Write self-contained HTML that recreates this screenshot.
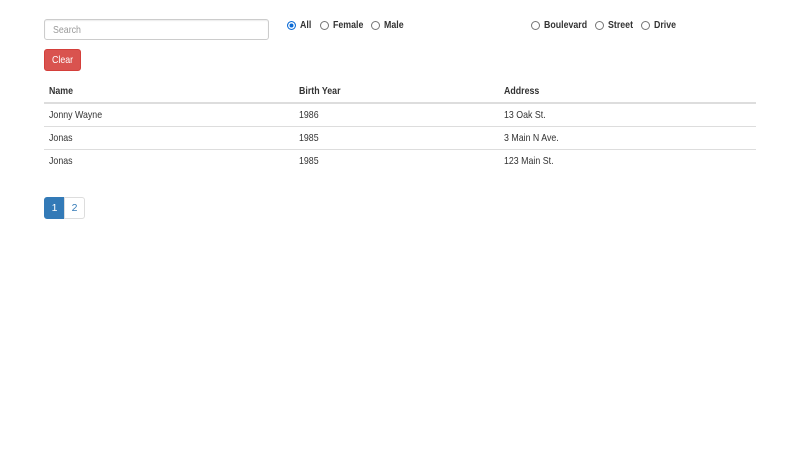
<!DOCTYPE html>
<html><head><meta charset="utf-8"><style>
*{box-sizing:border-box}
body{margin:0;width:800px;height:450px;background:#fff;font-family:"Liberation Sans",sans-serif;font-size:10.5px;color:#333;position:relative}
.abs{position:absolute}
.t{transform:scaleX(0.84);transform-origin:left center;white-space:nowrap}
.search{left:44px;top:19px;width:225px;height:21px;border:1px solid #ccc;border-radius:3px;color:#999;padding:4px 8px;box-shadow:inset 0 1px 1px rgba(0,0,0,.075)}
.radio{top:19px;font-weight:bold;display:flex;align-items:center;height:12px;white-space:nowrap}
.radio span.l{display:inline-block;transform:scaleX(0.84);transform-origin:left center}
.r{width:9px;height:9px;border:1px solid #767676;border-radius:50%;display:inline-block;margin-right:4px;background:#fff;flex:none}
.r.on{border:1px solid #0b6bd6;box-shadow:inset 0 0 0 1.5px #fff;background:#0b6bd6}
.btn{left:44px;top:49px;width:37px;height:22px;background:#d9534f;border:1px solid #d43f3a;border-radius:3px;color:#fff;text-align:center;line-height:21px}
.th{top:85px;font-weight:bold}
.line{left:44px;width:712px;height:1px;background:#ddd}
.pg{top:197px;width:21px;height:22px;border:1px solid #ddd;text-align:center;line-height:21px;color:#337ab7}
</style></head><body>
<div class="abs search"><span class="t" style="display:inline-block">Search</span></div>
<div class="abs radio" style="left:287px"><span class="r on"></span><span class="l">All</span></div>
<div class="abs radio" style="left:320px"><span class="r"></span><span class="l">Female</span></div>
<div class="abs radio" style="left:371px"><span class="r"></span><span class="l">Male</span></div>
<div class="abs radio" style="left:531px"><span class="r"></span><span class="l">Boulevard</span></div>
<div class="abs radio" style="left:595px"><span class="r"></span><span class="l">Street</span></div>
<div class="abs radio" style="left:641px"><span class="r"></span><span class="l">Drive</span></div>
<div class="abs btn"><span class="t" style="display:inline-block;transform-origin:center">Clear</span></div>
<div class="abs th t" style="left:49px">Name</div>
<div class="abs th t" style="left:299px">Birth Year</div>
<div class="abs th t" style="left:504px">Address</div>
<div class="abs line" style="top:102px;height:2px"></div>
<div class="abs t" style="left:49px;top:109px">Jonny Wayne</div>
<div class="abs t" style="left:299px;top:109px">1986</div>
<div class="abs t" style="left:504px;top:109px">13 Oak St.</div>
<div class="abs line" style="top:126px"></div>
<div class="abs t" style="left:49px;top:132px">Jonas</div>
<div class="abs t" style="left:299px;top:132px">1985</div>
<div class="abs t" style="left:504px;top:132px">3 Main N Ave.</div>
<div class="abs line" style="top:149px"></div>
<div class="abs t" style="left:49px;top:155px">Jonas</div>
<div class="abs t" style="left:299px;top:155px">1985</div>
<div class="abs t" style="left:504px;top:155px">123 Main St.</div>
<div class="abs pg" style="left:44px;background:#337ab7;border-color:#337ab7;color:#fff;border-radius:3px 0 0 3px">1</div>
<div class="abs pg" style="left:64px;border-radius:0 3px 3px 0">2</div>
</body></html>
